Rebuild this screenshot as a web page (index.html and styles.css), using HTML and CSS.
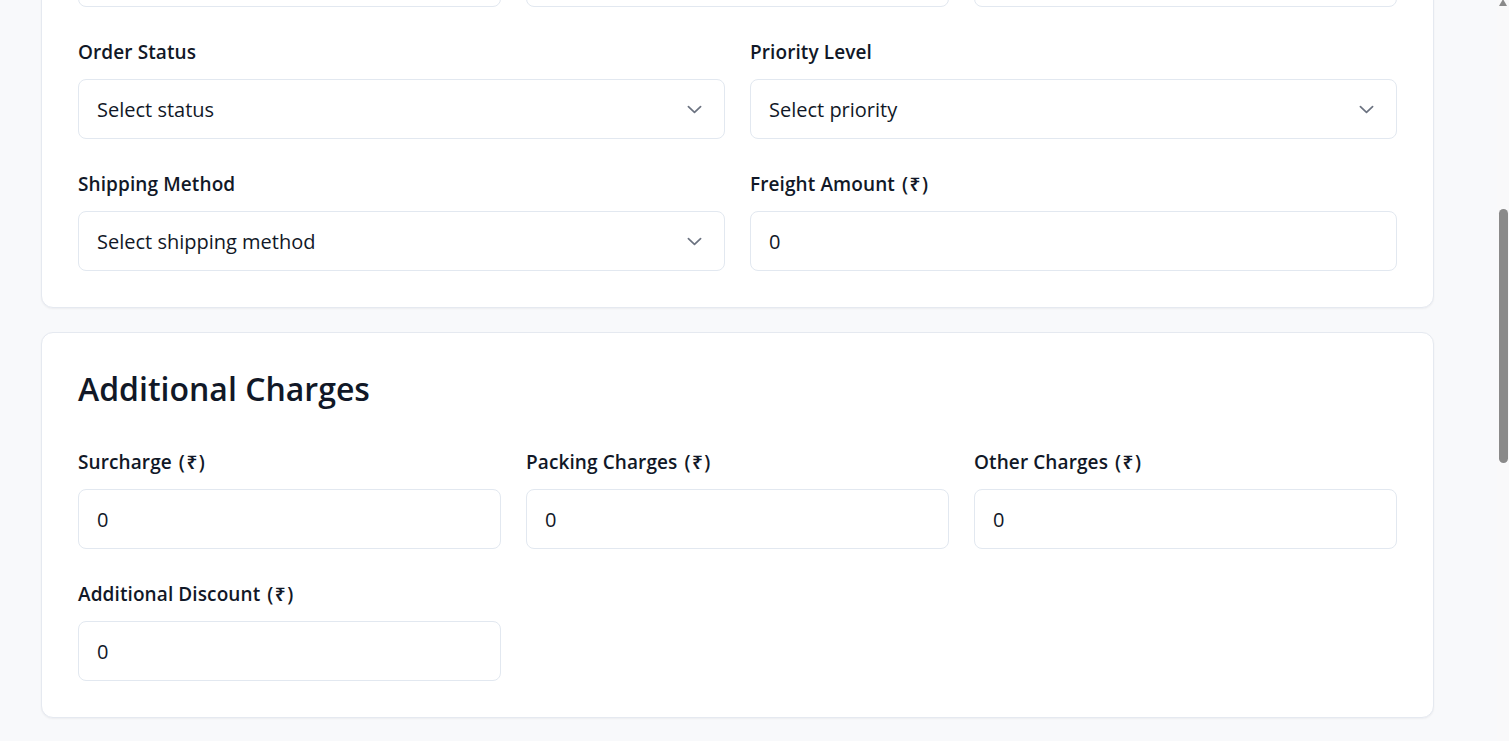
FILE: index.html
```html
<!DOCTYPE html>
<html lang="en">
<head>
<meta charset="utf-8">
<title>Order Form</title>
<link rel="stylesheet" href="styles.css">
</head>
<body>
<main class="page">
  <section class="card card-top">
    <div class="grid grid-3">
      <div class="field">
        <label class="label">Order Date</label>
        <div class="input">dd-mm-yyyy</div>
      </div>
      <div class="field">
        <label class="label">Delivery Date</label>
        <div class="input">dd-mm-yyyy</div>
      </div>
      <div class="field">
        <label class="label">Reference No.</label>
        <div class="input"></div>
      </div>
    </div>
    <div class="grid grid-2">
      <div class="field">
        <label class="label">Order Status</label>
        <div class="input select"><span>Select status</span><svg class="chev" viewBox="0 0 16 9"><path d="M1.5 1.5 L8 7.5 L14.5 1.5"/></svg></div>
      </div>
      <div class="field">
        <label class="label">Priority Level</label>
        <div class="input select"><span>Select priority</span><svg class="chev" viewBox="0 0 16 9"><path d="M1.5 1.5 L8 7.5 L14.5 1.5"/></svg></div>
      </div>
      <div class="field">
        <label class="label">Shipping Method</label>
        <div class="input select"><span>Select shipping method</span><svg class="chev" viewBox="0 0 16 9"><path d="M1.5 1.5 L8 7.5 L14.5 1.5"/></svg></div>
      </div>
      <div class="field">
        <label class="label">Freight Amount <span class="cur">(₹)</span></label>
        <div class="input">0</div>
      </div>
    </div>
  </section>

  <section class="card">
    <h2 class="title">Additional Charges</h2>
    <div class="grid grid-3">
      <div class="field">
        <label class="label">Surcharge <span class="cur">(₹)</span></label>
        <div class="input">0</div>
      </div>
      <div class="field">
        <label class="label">Packing Charges <span class="cur">(₹)</span></label>
        <div class="input">0</div>
      </div>
      <div class="field">
        <label class="label">Other Charges <span class="cur">(₹)</span></label>
        <div class="input">0</div>
      </div>
      <div class="field">
        <label class="label">Additional Discount <span class="cur">(₹)</span></label>
        <div class="input">0</div>
      </div>
    </div>
  </section>
</main>
<div class="scrollbar">
  <div class="sb-arrow"></div>
  <div class="sb-thumb"></div>
</div>
</body>
</html>
```

FILE: styles.css
```css
* { box-sizing: border-box; }
html, body { margin: 0; padding: 0; }
body {
  background: #f8f9fb;
  font-family: "Open Sans", "Noto Sans", Arial, sans-serif;
  color: #111827;
  overflow: hidden;
  height: 741px;
}
.page {
  width: 1497px;
  padding: 0 63px 24px 41px;
  display: flex;
  flex-direction: column;
  gap: 24px;
}
.card {
  background: #fff;
  border: 1px solid #e5e9f0;
  border-radius: 12px;
  padding: 36px;
  box-shadow: 0 1px 2px rgba(16, 24, 40, 0.05);
  display: flex;
  flex-direction: column;
  gap: 32px;
}
.card-top { margin-top: -130px; }
.grid {
  display: grid;
  column-gap: 25px;
  row-gap: 32px;
}
.grid-3 { grid-template-columns: repeat(3, 1fr); }
.grid-2 { grid-template-columns: repeat(2, 1fr); }
.field {
  display: flex;
  flex-direction: column;
  gap: 13px;
}
.label {
  font-size: 19px;
  font-weight: 600;
  line-height: 27px;
  color: #111827;
  letter-spacing: 0.1px;
}
.cur {
  letter-spacing: 1.5px;
  margin-left: 2px;
}
.input {
  height: 60px;
  border: 1px solid #e2e8f0;
  border-radius: 8px;
  background: #fff;
  padding: 0 18px;
  display: flex;
  align-items: center;
  font-size: 20px;
  color: #111827;
}
.select { justify-content: space-between; padding-right: 22px; }
.chev {
  width: 15px;
  height: 9px;
  fill: none;
  stroke: #6b7280;
  stroke-width: 1.8;
  stroke-linecap: round;
  stroke-linejoin: round;
}
.title {
  margin: 0 0 8px;
  font-size: 32px;
  font-weight: 600;
  line-height: 40px;
  color: #111827;
}
.scrollbar {
  position: fixed;
  top: 0;
  right: 0;
  width: 12px;
  height: 741px;
  background: #f9f9fa;
}
.sb-arrow {
  position: absolute;
  top: -1px;
  left: 2px;
  width: 0;
  height: 0;
  border-left: 4px solid transparent;
  border-right: 4px solid transparent;
  border-bottom: 7px solid #8a8a8a;
}
.sb-thumb {
  position: absolute;
  top: 209px;
  left: 2px;
  width: 9px;
  height: 254px;
  background: #8a8a8a;
  border-radius: 5px;
}
```
